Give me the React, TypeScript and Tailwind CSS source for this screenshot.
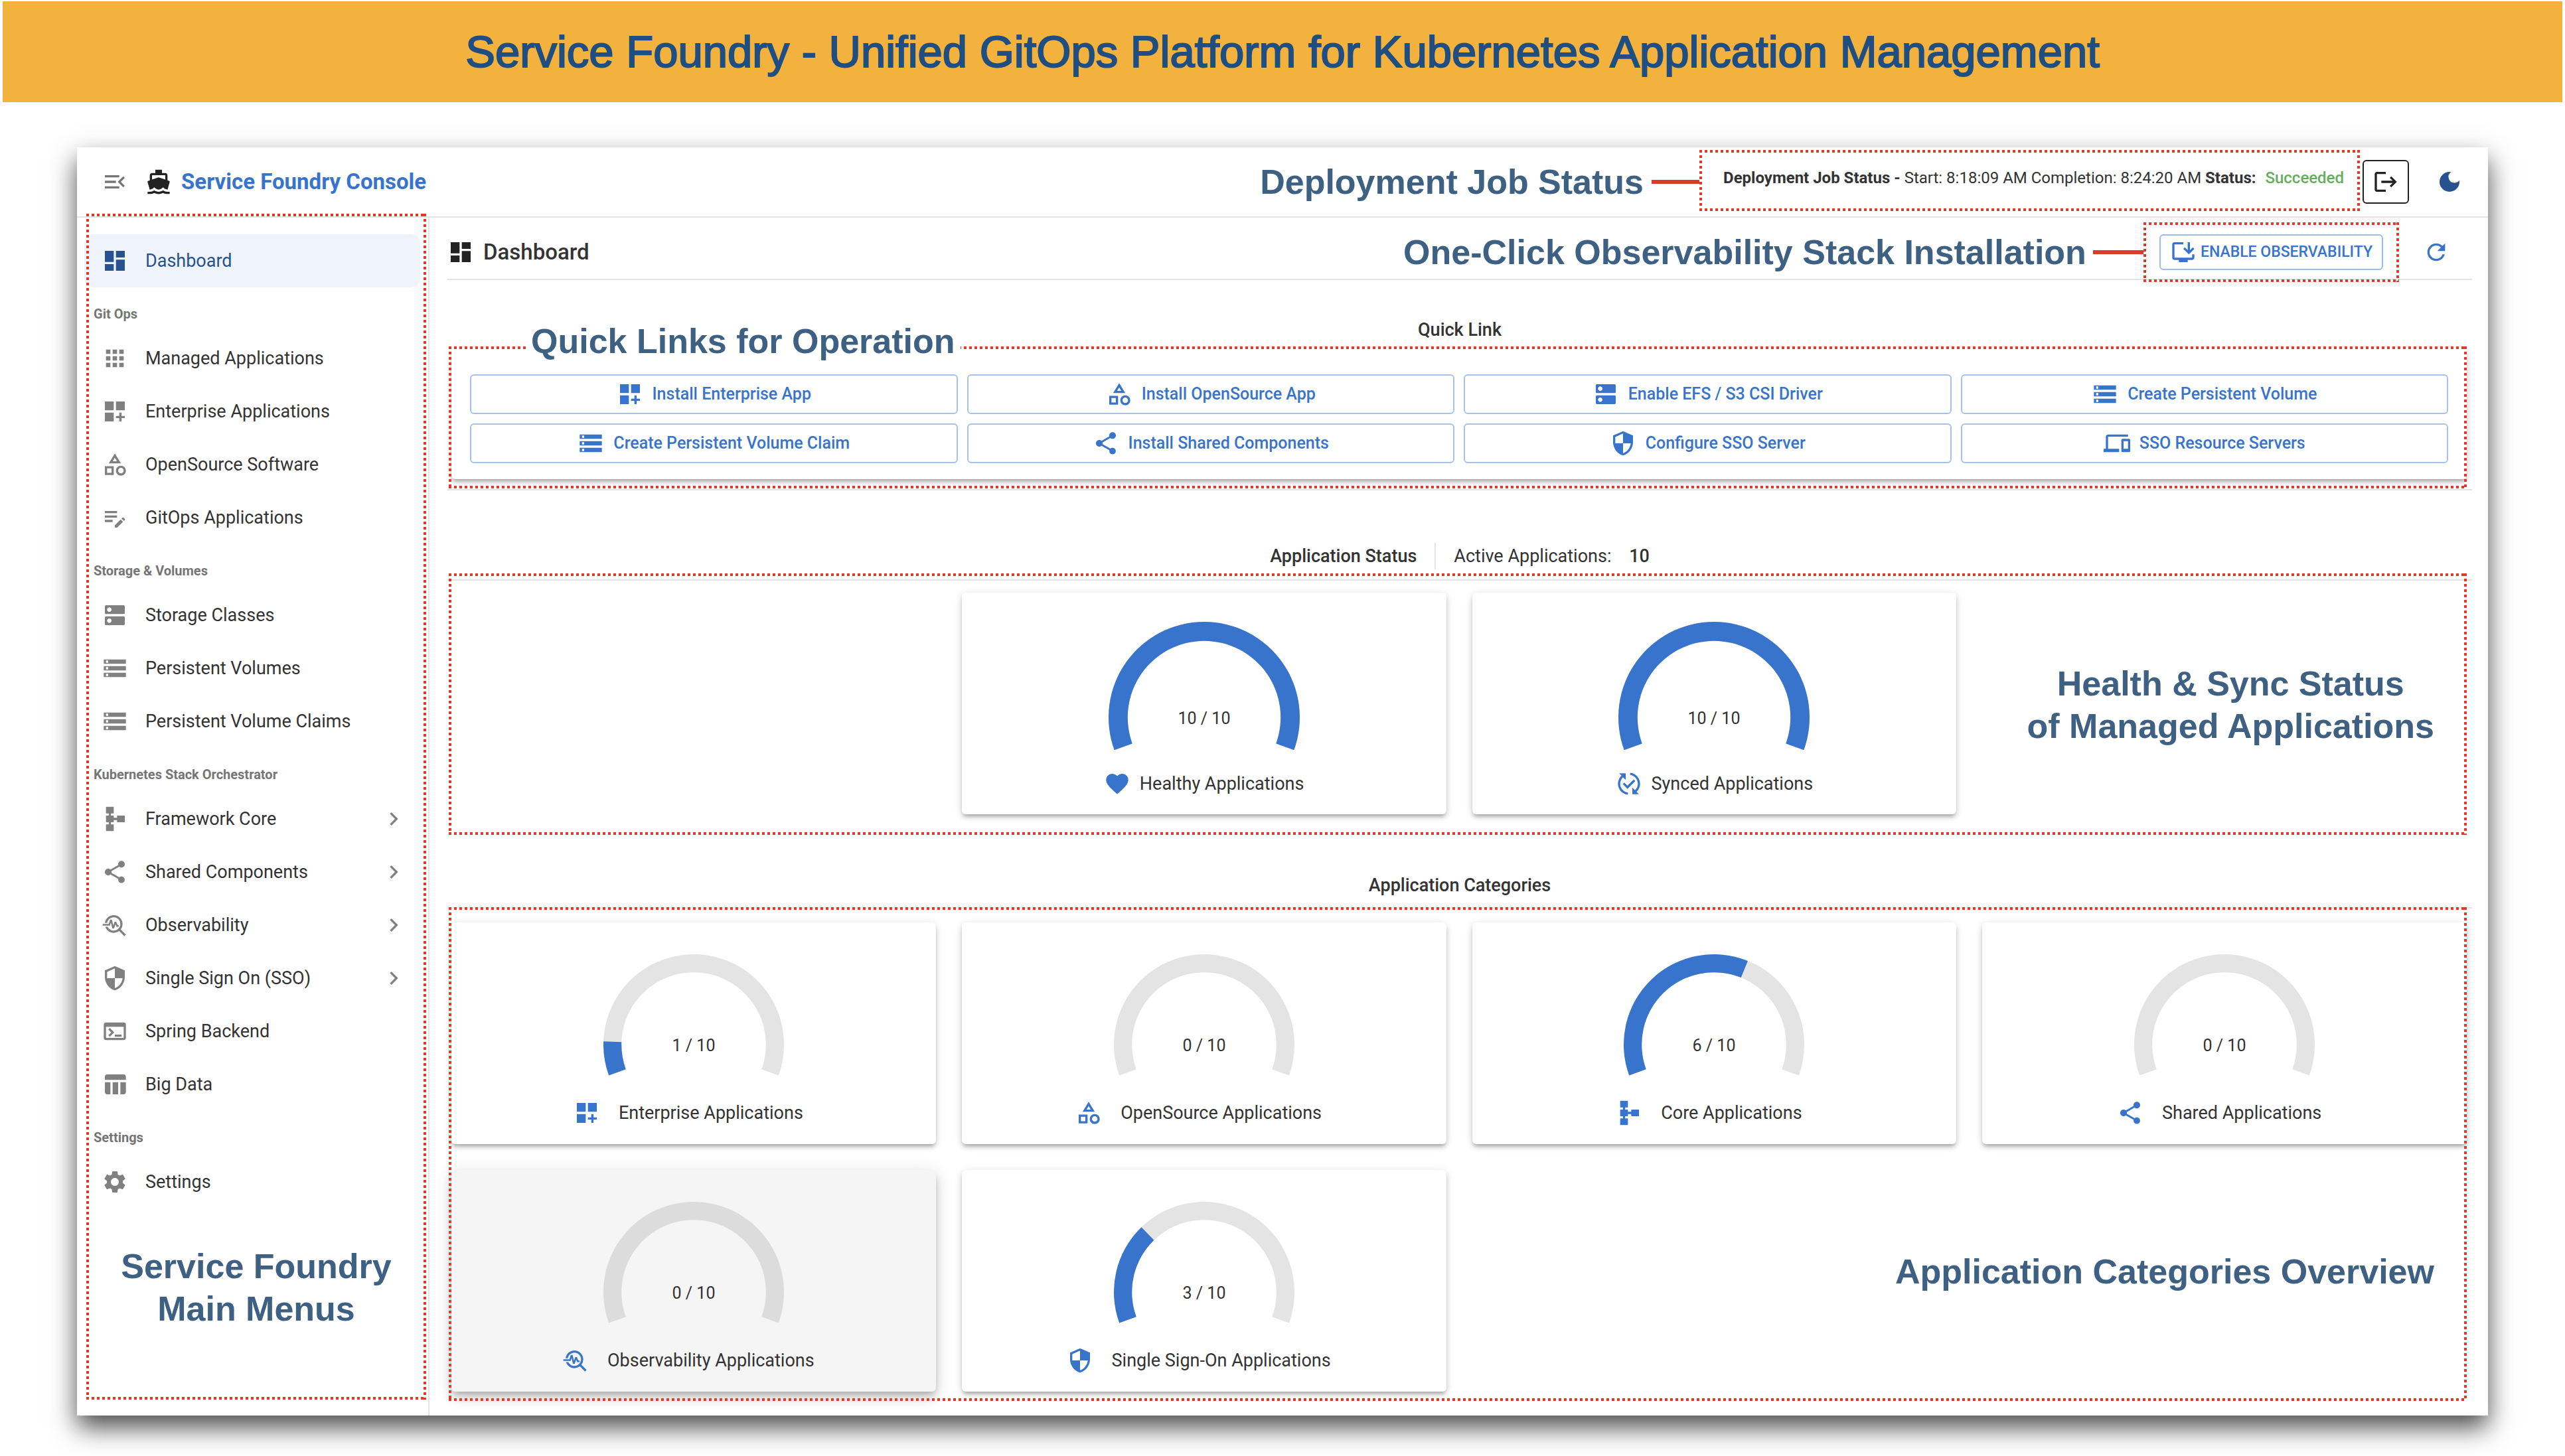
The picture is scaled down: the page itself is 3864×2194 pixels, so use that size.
import React from "react";
import type { IconType } from "react-icons";
import {
  MdApps,
  MdChevronRight,
  MdDarkMode,
  MdDashboard,
  MdDashboardCustomize,
  MdDevices,
  MdDirectionsBoat,
  MdDns,
  MdEditNote,
  MdFavorite,
  MdInstallDesktop,
  MdLogout,
  MdMenuOpen,
  MdOutlineCategory,
  MdPublishedWithChanges,
  MdRefresh,
  MdSchema,
  MdSecurity,
  MdSettings,
  MdShare,
  MdStorage,
  MdTableChart,
  MdTerminal,
  MdTroubleshoot,
} from "react-icons/md";

type NavEntry = { label: string; icon: IconType; active?: boolean; expandable?: boolean };
type NavGroup = { title?: string; items: NavEntry[] };

const navGroups: NavGroup[] = [
  { items: [{ label: "Dashboard", icon: MdDashboard, active: true }] },
  {
    title: "Git Ops",
    items: [
      { label: "Managed Applications", icon: MdApps },
      { label: "Enterprise Applications", icon: MdDashboardCustomize },
      { label: "OpenSource Software", icon: MdOutlineCategory },
      { label: "GitOps Applications", icon: MdEditNote },
    ],
  },
  {
    title: "Storage & Volumes",
    items: [
      { label: "Storage Classes", icon: MdDns },
      { label: "Persistent Volumes", icon: MdStorage },
      { label: "Persistent Volume Claims", icon: MdStorage },
    ],
  },
  {
    title: "Kubernetes Stack Orchestrator",
    items: [
      { label: "Framework Core", icon: MdSchema, expandable: true },
      { label: "Shared Components", icon: MdShare, expandable: true },
      { label: "Observability", icon: MdTroubleshoot, expandable: true },
      { label: "Single Sign On (SSO)", icon: MdSecurity, expandable: true },
      { label: "Spring Backend", icon: MdTerminal },
      { label: "Big Data", icon: MdTableChart },
    ],
  },
  { title: "Settings", items: [{ label: "Settings", icon: MdSettings }] },
];

const quickLinks: { label: string; icon: IconType }[] = [
  { label: "Install Enterprise App", icon: MdDashboardCustomize },
  { label: "Install OpenSource App", icon: MdOutlineCategory },
  { label: "Enable EFS / S3 CSI Driver", icon: MdDns },
  { label: "Create Persistent Volume", icon: MdStorage },
  { label: "Create Persistent Volume Claim", icon: MdStorage },
  { label: "Install Shared Components", icon: MdShare },
  { label: "Configure SSO Server", icon: MdSecurity },
  { label: "SSO Resource Servers", icon: MdDevices },
];

const categories: { label: string; icon: IconType; value: number; hovered?: boolean }[] = [
  { label: "Enterprise Applications", icon: MdDashboardCustomize, value: 1 },
  { label: "OpenSource Applications", icon: MdOutlineCategory, value: 0 },
  { label: "Core Applications", icon: MdSchema, value: 6 },
  { label: "Shared Applications", icon: MdShare, value: 0 },
  { label: "Observability Applications", icon: MdTroubleshoot, value: 0, hovered: true },
  { label: "Single Sign-On Applications", icon: MdSecurity, value: 3 },
];

/** Red square-dotted outline that overlays its positioned parent. */
function Frame({ className }: { className: string }) {
  const row =
    "absolute inset-x-0 h-1 bg-[repeating-linear-gradient(90deg,#dc3b28_0,#dc3b28_4px,transparent_4px,transparent_8px)]";
  const col =
    "absolute inset-y-0 w-1 bg-[repeating-linear-gradient(180deg,#dc3b28_0,#dc3b28_4px,transparent_4px,transparent_8px)]";
  return (
    <div aria-hidden className={`pointer-events-none absolute ${className}`}>
      <span className={`${row} top-0`} />
      <span className={`${row} bottom-0`} />
      <span className={`${col} left-0`} />
      <span className={`${col} right-0`} />
    </div>
  );
}

function Callout({ children, className = "" }: { children: React.ReactNode; className?: string }) {
  return (
    <p
      className={`font-['Liberation_Sans',Arial,sans-serif] text-[52px] leading-[64px] font-bold whitespace-nowrap text-[#3d6083] ${className}`}
    >
      {children}
    </p>
  );
}

function polar(r: number, size: number, deg: number) {
  const a = (deg * Math.PI) / 180;
  return `${size + r * Math.sin(a)} ${size - r * Math.cos(a)}`;
}

function arc(size: number, from: number, to: number) {
  const inner = size * 0.8;
  const large = to - from > 180 ? 1 : 0;
  return [
    `M${polar(size, size, from)}`,
    `A${size} ${size} 0 ${large} 1 ${polar(size, size, to)}`,
    `L${polar(inner, size, to)}`,
    `A${inner} ${inner} 0 ${large} 0 ${polar(inner, size, from)}Z`,
  ].join("");
}

function Gauge({ value, radius, track }: { value: number; radius: number; track: string }) {
  const height = Math.round(radius * 1.342);
  return (
    <svg
      role="img"
      aria-label={`${value} of 10`}
      width={radius * 2}
      height={height}
      viewBox={`0 0 ${radius * 2} ${height}`}
    >
      <path d={arc(radius, -110, 110)} className={track} />
      {value > 0 && <path d={arc(radius, -110, -110 + value * 22)} className="fill-[#3874cb]" />}
      <text x={radius} y={radius + 10} textAnchor="middle" className="fill-[#333333] text-[25px]">
        {value} / 10
      </text>
    </svg>
  );
}

function NavItem({ label, icon: Icon, active, expandable }: NavEntry) {
  return (
    <a
      href="#"
      className={`flex h-20 items-center rounded-[14px] pr-5 pl-[26px] text-[27px] ${
        active ? "bg-[#eff4fc] text-[#27518f]" : "text-[#333333]"
      }`}
    >
      <Icon size={40} className={active ? "text-[#27518f]" : "text-[#808080]"} />
      <span className="ml-[26px] flex-1">{label}</span>
      {expandable && <MdChevronRight size={40} className="text-[#808080]" />}
    </a>
  );
}

function Sidebar() {
  return (
    <aside className="relative w-[531px] shrink-0 border-r-2 border-[#e4e4e4] pt-[25px] pr-3 pl-[11px]">
      <nav>
        {navGroups.map((group, i) => (
          <section key={i}>
            {group.title && (
              <h2 className="flex h-[67px] items-center pt-3 pl-[14px] text-[20px] font-bold text-[#757575]">
                {group.title}
              </h2>
            )}
            {group.items.map((item) => (
              <NavItem key={item.label} {...item} />
            ))}
          </section>
        ))}
      </nav>
      <Callout className="mt-[55px] pl-3 text-center">
        Service Foundry
        <br />
        Main Menus
      </Callout>
      <Frame className="-top-[6px] right-[3px] bottom-6 left-[14px]" />
    </aside>
  );
}

function Header() {
  return (
    <header className="flex h-[106px] items-center border-b-2 border-[#e4e4e4] pr-[38px] pl-[37px]">
      <button aria-label="Collapse menu" className="text-[#757575]">
        <MdMenuOpen size={40} />
      </button>
      <MdDirectionsBoat size={40} className="ml-[26px] text-[#222222]" />
      <h1 className="ml-[14px] text-[33px] font-bold whitespace-nowrap text-[#3874cb]">Service Foundry Console</h1>
      <div className="ml-auto flex items-center">
        <Callout>Deployment Job Status</Callout>
        <span className="ml-3 h-[6px] w-[72px] bg-[#dc3b28]" />
        <div className="relative flex h-[92px] items-center pr-6 pb-3 pl-9 text-[24px] whitespace-nowrap text-[#333333]">
          <p>
            <b className="font-bold">Deployment Job Status -</b> Start: 8:18:09 AM Completion: 8:24:20 AM{" "}
            <b className="font-bold">Status:</b>
            <span className="ml-2 font-medium text-[#64ad5c]"> Succeeded</span>
          </p>
          <Frame className="inset-x-0 -top-[2px] bottom-[2px]" />
        </div>
        <button
          aria-label="Log out"
          className="ml-1 flex h-[66px] w-[70px] items-center justify-center rounded-md border-2 border-[#222222] text-[#222222]"
        >
          <MdLogout size={40} />
        </button>
        <button aria-label="Dark mode" className="ml-[41px] text-[#27518f]">
          <MdDarkMode size={40} />
        </button>
      </div>
    </header>
  );
}

function Rule({ className = "" }: { className?: string }) {
  return <hr className={`h-[2px] border-0 bg-[#e4e4e4] ${className}`} />;
}

const cardShadow = "shadow-[0_5px_5px_-3px_rgba(0,0,0,0.2),0_5px_7px_0_rgba(0,0,0,0.14),0_2px_13px_0_rgba(0,0,0,0.12)]";
const cardShadowRaised =
  "shadow-[0_5px_8px_-3px_rgba(0,0,0,0.2),0_10px_16px_0_rgba(0,0,0,0.14),0_4px_28px_0_rgba(0,0,0,0.12)]";

function StatusCard({ label, icon: Icon, className = "" }: { label: string; icon: IconType; className?: string }) {
  return (
    <article className={`flex flex-col items-center rounded-md bg-white pt-11 pb-[26px] ${cardShadow} ${className}`}>
      <Gauge value={10} radius={144} track="fill-[#e4e4e4]" />
      <div className="mt-[31px] flex items-center text-[27px] leading-10 text-[#333333]">
        <Icon size={40} className="text-[#3874cb]" />
        <span className="ml-[14px]">{label}</span>
      </div>
    </article>
  );
}

export default function App() {
  return (
    <div className="bg-white font-['Roboto',sans-serif]">
      <div className="px-1 pt-[2px]">
        <h1 className="bg-[#f3b13e] py-[38px] text-center font-['Liberation_Sans',Arial,sans-serif] text-[67px] leading-[76px] text-[#1f4e82] [-webkit-text-stroke:2px_#1f4e82]">
          Service Foundry - Unified GitOps Platform for Kubernetes Application Management
        </h1>
      </div>

      <div className="mx-[116px] mt-[68px] mb-[60px] bg-white shadow-[0_18px_36px_rgba(0,0,0,0.7)]">
        <Header />
        <div className="flex">
          <Sidebar />
          <main className="min-w-0 flex-1 pr-6 pb-9 pl-[27px]">
            <div className="flex items-center border-b-2 border-[#e4e4e4] pt-5 pb-2">
              <MdDashboard size={40} className="text-[#222222]" />
              <h2 className="ml-[14px] text-[33px] font-medium text-[#333333]">Dashboard</h2>
              <Callout className="ml-auto">One-Click Observability Stack Installation</Callout>
              <span className="ml-[10px] h-[6px] w-[76px] bg-[#dc3b28]" />
              <div className="relative px-6">
                <button className="flex h-[54px] items-center rounded-md border-2 border-[#9dbce9] pr-[14px] pl-[14px] text-[23px] font-medium whitespace-nowrap text-[#3874cb]">
                  <MdInstallDesktop size={40} />
                  <span className="ml-[6px]">ENABLE OBSERVABILITY</span>
                </button>
                <Frame className="inset-x-0 -inset-y-[18px]" />
              </div>
              <button aria-label="Refresh" className="mr-[34px] ml-9 text-[#3874cb]">
                <MdRefresh size={40} />
              </button>
            </div>

            <section className="relative mt-[55px]">
              <h3 className="text-center text-[27px] leading-10 font-medium text-[#333333]">Quick Link</h3>
              <div
                className={`mt-[7px] mr-2 ml-[6px] grid grid-cols-4 gap-[14px] rounded-md bg-white px-7 pt-10 pb-6 ${cardShadow}`}
              >
                {quickLinks.map(({ label, icon: Icon }) => (
                  <button
                    key={label}
                    className="flex h-[60px] items-center justify-center rounded-md border-2 border-[#a6c1ea] text-[25px] font-medium text-[#3874cb]"
                  >
                    <Icon size={40} />
                    <span className="ml-[14px]">{label}</span>
                  </button>
                ))}
              </div>
              <Rule className="mt-[15px]" />
              <Frame className="top-[45px] right-2 bottom-[3px] left-[2px]" />
              <Callout className="absolute top-[5px] left-[118px] bg-white px-2">Quick Links for Operation</Callout>
            </section>

            <section className="mt-[79px]">
              <div className="flex h-10 items-center justify-center text-[27px] text-[#333333]">
                <h3 className="font-medium">Application Status</h3>
                <span className="mx-[27px] h-10 w-[2px] bg-[#e4e4e4]" />
                <p>
                  Active Applications: <b className="ml-5 font-medium">10</b>
                </p>
              </div>
              <div className="relative mt-[15px]">
                <Rule />
                <div className="mt-[18px] mr-2 ml-[6px] grid grid-cols-4 gap-[39px]">
                  <StatusCard label="Healthy Applications" icon={MdFavorite} className="col-start-2" />
                  <StatusCard label="Synced Applications" icon={MdPublishedWithChanges} />
                </div>
                <Callout className="absolute top-[125px] right-[57px] text-center">
                  Health &amp; Sync Status
                  <br />
                  of Managed Applications
                </Callout>
                <Frame className="-top-[9px] right-2 -bottom-[31px] left-[2px]" />
              </div>
            </section>

            <section className="mt-[87px]">
              <h3 className="text-center text-[27px] leading-10 font-medium text-[#333333]">Application Categories</h3>
              <div className="relative mt-[13px]">
                <Rule />
                <div className="mt-[21px] mr-2 ml-[6px] grid grid-cols-4 gap-[39px]">
                  {categories.map(({ label, icon: Icon, value, hovered }) => (
                    <article
                      key={label}
                      className={`flex flex-col items-center rounded-md pt-12 pb-[27px] ${
                        hovered ? `bg-[#f5f5f5] ${cardShadowRaised}` : `bg-white ${cardShadow}`
                      }`}
                    >
                      <Gauge value={value} radius={136} track={hovered ? "fill-[#dcdcdc]" : "fill-[#e4e4e4]"} />
                      <div className="mt-9 flex items-center pr-4 text-[27px] leading-10 text-[#333333]">
                        <Icon size={40} className="text-[#3874cb]" />
                        <span className="ml-7">{label}</span>
                      </div>
                    </article>
                  ))}
                </div>
                <Callout className="absolute right-[57px] bottom-[149px]">Application Categories Overview</Callout>
                <Frame className="top-0 right-2 -bottom-[14px] left-[2px]" />
              </div>
            </section>
          </main>
        </div>
      </div>
    </div>
  );
}
